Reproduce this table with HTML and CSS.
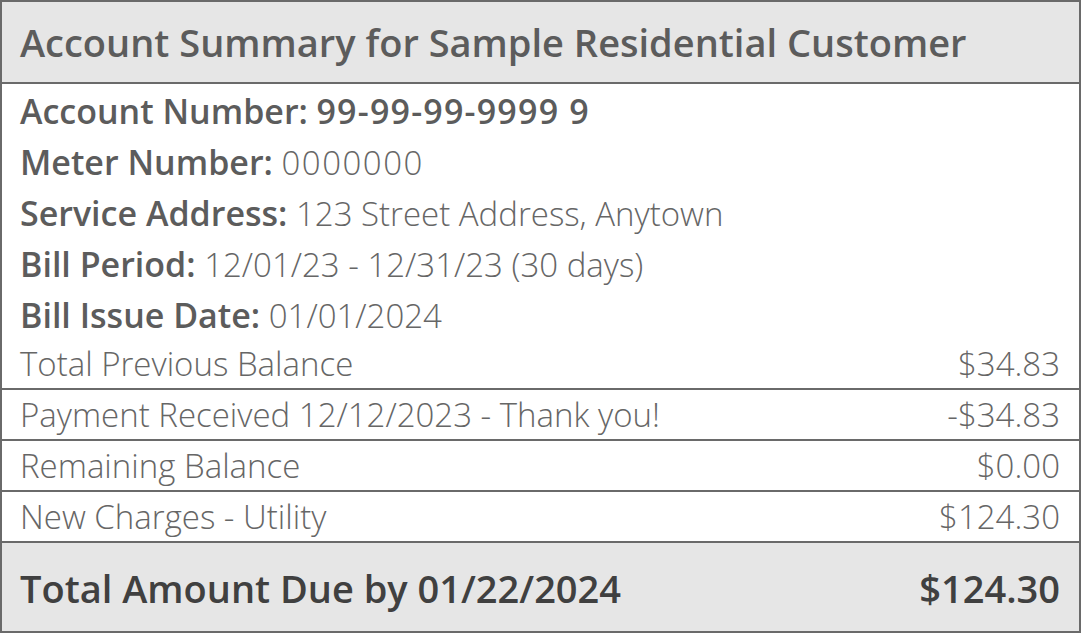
FILE: index.html
```html
<!DOCTYPE html>
<html lang="en">
<head>
  <meta charset="UTF-8">
  <meta name="viewport" content="width=device-width, initial-scale=1.0">
  <title>Account Summary</title>
  <link rel="stylesheet" href="styles.css">
</head>
<body>
  <div class="summary">
    <div class="summary-head">Account Summary for Sample Residential Customer</div>

    <div class="info-row"><b>Account Number:</b> <b class="acct">99-99-99-9999 9</b></div>
    <div class="info-row"><b>Meter Number:</b> <span class="zeros">0000000</span></div>
    <div class="info-row"><b>Service Address:</b> 123 Street Address, Anytown</div>
    <div class="info-row"><b>Bill Period:</b> 12/01/23 - 12/31/23 (30 days)</div>
    <div class="info-row"><b>Bill Issue Date:</b> 01/01/2024</div>

    <div class="line-row">
      <span>Total Previous Balance</span>
      <span>$34.83</span>
    </div>
    <div class="line-row">
      <span>Payment Received 12/12/2023 - Thank you!</span>
      <span>-$34.83</span>
    </div>
    <div class="line-row">
      <span>Remaining Balance</span>
      <span>$0.00</span>
    </div>
    <div class="line-row">
      <span>New Charges - Utility</span>
      <span>$124.30</span>
    </div>

    <div class="summary-total">
      <span>Total Amount Due by 01/22/2024</span>
      <span>$124.30</span>
    </div>
  </div>
</body>
</html>
```

FILE: styles.css
```css
/* Account summary box */
body {
  margin: 0;
  background: #fff;
  font-family: "Open Sans", "Noto Sans", Arial, sans-serif;
  color: #666;
}
.summary {
  width: 1081px;
  height: 633px;
  box-sizing: border-box;
  border: 2px solid #6a6a6a;
}
.summary-head {
  height: 80px;
  line-height: 80px;
  padding: 0 18px;
  background: #e6e6e6;
  border-bottom: 2px solid #6a6a6a;
  font-size: 38px;
  font-weight: 600;
  color: #5c5c5c;
}
.info-row {
  height: 51px;
  line-height: 54px;
  padding: 0 18px;
  font-size: 33px;
  font-weight: 300;
  color: #666;
}
.info-row b {
  font-size: 34px;
  font-weight: 600;
  color: #5c5c5c;
}
.info-row .acct {
  letter-spacing: 1.2px;
}
.info-row .zeros {
  letter-spacing: 1.5px;
}
.line-row {
  display: flex;
  justify-content: space-between;
  height: 49px;
  line-height: 49px;
  padding: 0 19px 0 18px;
  border-bottom: 2px solid #6a6a6a;
  font-size: 33px;
  font-weight: 300;
  color: #666;
}
.summary-total {
  display: flex;
  justify-content: space-between;
  height: 88px;
  line-height: 90px;
  padding: 0 19px 0 18px;
  background: #e6e6e6;
  font-size: 38px;
  font-weight: 600;
  color: #404040;
}
```
